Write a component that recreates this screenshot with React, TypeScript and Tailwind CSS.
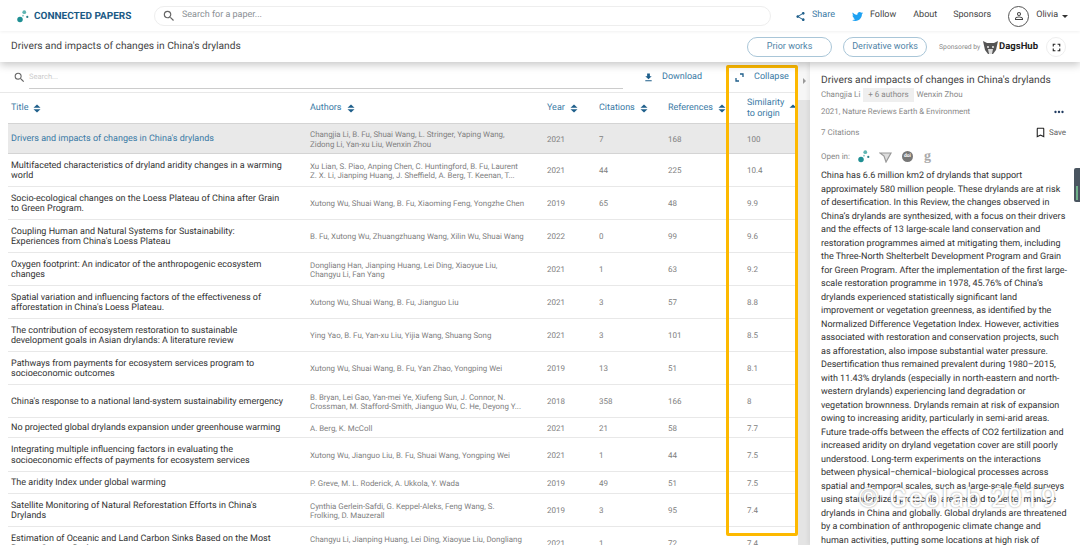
import React from 'react';
import { FaTwitter } from 'react-icons/fa';
import { MdShare, MdFileDownload, MdSearch, MdPersonOutline, MdBookmarkBorder, MdMoreHoriz, MdFullscreen } from 'react-icons/md';

const papers = [
  { title: "Drivers and impacts of changes in China's drylands", authors: 'Changjia Li, B. Fu, Shuai Wang, L. Stringer, Yaping Wang, Zidong Li, Yan-xu Liu, Wenxin Zhou', year: 2021, cit: 7, refs: 168, sim: '100', h: 'h-[31px]' },
  { title: 'Multifaceted characteristics of dryland aridity changes in a warming world', authors: 'Xu Lian, S. Piao, Anping Chen, C. Huntingford, B. Fu, Laurent Z. X. Li, Jianping Huang, J. Sheffield, A. Berg, T. Keenan, T...', year: 2021, cit: 44, refs: 225, sim: '10.4', h: 'h-[33px]' },
  { title: 'Socio-ecological changes on the Loess Plateau of China after Grain to Green Program.', authors: 'Xutong Wu, Shuai Wang, B. Fu, Xiaoming Feng, Yongzhe Chen', year: 2019, cit: 65, refs: 48, sim: '9.9', h: 'h-[33px]' },
  { title: "Coupling Human and Natural Systems for Sustainability: Experiences from China's Loess Plateau", authors: 'B. Fu, Xutong Wu, Zhuangzhuang Wang, Xilin Wu, Shuai Wang', year: 2022, cit: 0, refs: 99, sim: '9.6', h: 'h-[33px]' },
  { title: 'Oxygen footprint: An indicator of the anthropogenic ecosystem changes', authors: 'Dongliang Han, Jianping Huang, Lei Ding, Xiaoyue Liu, Changyu Li, Fan Yang', year: 2021, cit: 1, refs: 63, sim: '9.2', h: 'h-[33px]' },
  { title: "Spatial variation and influencing factors of the effectiveness of afforestation in China's Loess Plateau.", authors: 'Xutong Wu, Shuai Wang, B. Fu, Jianguo Liu', year: 2021, cit: 3, refs: 57, sim: '8.8', h: 'h-[33px]' },
  { title: 'The contribution of ecosystem restoration to sustainable development goals in Asian drylands: A literature review', authors: 'Ying Yao, B. Fu, Yan-xu Liu, Yijia Wang, Shuang Song', year: 2021, cit: 3, refs: 101, sim: '8.5', h: 'h-[33px]' },
  { title: 'Pathways from payments for ecosystem services program to socioeconomic outcomes', authors: 'Xutong Wu, Shuai Wang, B. Fu, Yan Zhao, Yongping Wei', year: 2019, cit: 13, refs: 51, sim: '8.1', h: 'h-[33px]' },
  { title: "China's response to a national land-system sustainability emergency", authors: 'B. Bryan, Lei Gao, Yan-mei Ye, Xiufeng Sun, J. Connor, N. Crossman, M. Stafford-Smith, Jianguo Wu, C. He, Deyong Y...', year: 2018, cit: 358, refs: 166, sim: '8', h: 'h-[33px]' },
  { title: 'No projected global drylands expansion under greenhouse warming', authors: 'A. Berg, K. McColl', year: 2021, cit: 21, refs: 58, sim: '7.7', h: 'h-[20px]' },
  { title: 'Integrating multiple influencing factors in evaluating the socioeconomic effects of payments for ecosystem services', authors: 'Xutong Wu, Jianguo Liu, B. Fu, Shuai Wang, Yongping Wei', year: 2021, cit: 1, refs: 44, sim: '7.5', h: 'h-[34px]' },
  { title: 'The aridity Index under global warming', authors: 'P. Greve, M. L. Roderick, A. Ukkola, Y. Wada', year: 2019, cit: 49, refs: 51, sim: '7.5', h: 'h-[22px]' },
  { title: "Satellite Monitoring of Natural Reforestation Efforts in China's Drylands", authors: 'Cynthia Gerlein-Safdi, G. Keppel-Aleks, Feng Wang, S. Frolking, D. Mauzerall', year: 2019, cit: 3, refs: 95, sim: '7.4', h: 'h-[33px]' },
  { title: 'Estimation of Oceanic and Land Carbon Sinks Based on the Most Recent Oxygen Budget', authors: 'Changyu Li, Jianping Huang, Lei Ding, Xiaoyue Liu, Dongliang Han, Jiping Huang', year: 2021, cit: 1, refs: 72, sim: '7.4', h: 'h-[33px]' },
];

const abstractLines = [
  'China has 6.6 million km2 of drylands that support',
  'approximately 580 million people. These drylands are at risk',
  'of desertification. In this Review, the changes observed in',
  'China\u2019s drylands are synthesized, with a focus on their drivers',
  'and the effects of 13 large-scale land conservation and',
  'restoration programmes aimed at mitigating them, including',
  'the Three-North Shelterbelt Development Program and Grain',
  'for Green Program. After the implementation of the first large-',
  'scale restoration programme in 1978, 45.76% of China\u2019s',
  'drylands experienced statistically significant land',
  'improvement or vegetation greenness, as identified by the',
  'Normalized Difference Vegetation Index. However, activities',
  'associated with restoration and conservation projects, such',
  'as afforestation, also impose substantial water pressure.',
  'Desertification thus remained prevalent during 1980\u20132015,',
  'with 11.43% drylands (especially in north-eastern and north-',
  'western drylands) experiencing land degradation or',
  'vegetation brownness. Drylands remain at risk of expansion',
  'owing to increasing aridity, particularly in semi-arid areas.',
  'Future trade-offs between the effects of CO2 fertilization and',
  'increased aridity on dryland vegetation cover are still poorly',
  'understood. Long-term experiments on the interactions',
  'between physical\u2212chemical\u2212biological processes across',
  'spatial and temporal scales, such as large-scale field surveys',
  'using standardized protocols, are needed to better manage',
  'drylands in China and globally. Global drylands are threatened',
  'by a combination of anthropogenic climate change and',
  'human activities, putting some locations at high risk of',
];

const Sort = ({ up = false }: { up?: boolean }) => (
  <svg width="8" height="9" viewBox="0 0 8 9" className="shrink-0">
    <path d="M4 0.5 L7.5 3.8 H0.5 Z" fill="#1f5f8b" />
    {!up && <path d="M4 8.5 L7.5 5.2 H0.5 Z" fill="#1f5f8b" />}
  </svg>
);

const Logo = () => (
  <svg width="12" height="13" viewBox="0 0 14 15">
    <circle cx="3.5" cy="11" r="3.2" fill="#1f8f93" />
    <circle cx="8.5" cy="2.5" r="2.2" fill="#5fb5b2" />
    <circle cx="12" cy="8" r="1.3" fill="#2c7f86" />
    <circle cx="7" cy="6.5" r="1" fill="#7cc4c0" />
  </svg>
);

export default function App() {
  return (
    <div className="h-[545px] w-[1080px] overflow-hidden bg-white font-['Roboto',sans-serif] text-[#444] [text-rendering:geometricPrecision]">
      {/* top bar */}
      <header className="relative z-20 flex h-[31px] items-center bg-white pl-[17px] pt-[1px] shadow-[0_1px_3px_rgba(0,0,0,0.06)]">
        <Logo />
        <span className="ml-[5px] w-[120px] text-[10px] font-bold text-[#1b5a85]">CONNECTED PAPERS</span>
        <div className="flex h-[20px] w-[617px] items-center gap-[6px] rounded-full border border-[#eee] pl-[7px] text-[9px] text-[#8a8f94]">
          <MdSearch size={14} className="text-[#666]" />
          Search for a paper...
        </div>
        <div className="flex items-center gap-[6px] pl-[24px] text-[9px] text-[#3a7aa5]">
          <MdShare size={11} className="text-[#1f5f8b]" /> Share
        </div>
        <div className="flex items-center gap-[7px] pl-[17px] text-[9px]">
          <FaTwitter size={11} className="text-[#1da1f2]" /> Follow
        </div>
        <span className="pl-[17px] text-[9px]">About</span>
        <span className="pl-[16px] text-[9px]">Sponsors</span>
        <div className="ml-[17px] flex h-[21px] w-[21px] items-center justify-center rounded-full border border-[#555]">
          <MdPersonOutline size={12} />
        </div>
        <span className="pl-[7px] text-[9px]">Olivia</span>
        <span className="ml-[4px] h-0 w-0 border-x-[3px] border-t-[3px] border-x-transparent border-t-[#333]" />
      </header>

      {/* paper bar */}
      <div className="relative z-10 flex h-[31px] items-center bg-white pl-[11px] pr-[14px] pt-[1px] shadow-[0_3px_8px_rgba(0,0,0,0.22)]">
        <span className="flex-1 text-[10.2px] text-[#444]">Drivers and impacts of changes in China's drylands</span>
        <button className="flex h-[20px] w-[85px] items-center justify-center rounded-full border border-[#a9c6d8] text-[9px] text-[#4f83a6]">Prior works</button>
        <button className="ml-[11px] flex h-[20px] w-[84px] items-center justify-center rounded-full border border-[#a9c6d8] text-[9px] text-[#4f83a6]">Derivative works</button>
        <span className="ml-[12px] w-[42px] text-[6.8px] whitespace-nowrap text-[#888]">Sponsored by</span>
        <svg width="15" height="13" viewBox="0 0 15 13" className="ml-[2px]">
          <path d="M0 0 L4 2 H11 L15 0 L13 9 L10 13 H5 L2 9 Z" fill="#555" />
          <path d="M5 8 H10 L9 13 H6 Z" fill="#ddd" />
          <circle cx="5" cy="6" r="0.9" fill="#fff" />
          <circle cx="10" cy="6" r="0.9" fill="#fff" />
        </svg>
        <span className="ml-[1px] text-[9.5px] font-bold text-[#222]">DagsHub</span>
        <div className="ml-[8px] flex h-[20px] w-[20px] items-center justify-center rounded-full border border-[#eee]">
          <MdFullscreen size={13} className="text-[#222]" />
        </div>
      </div>

      <main className="relative flex h-[483px]">
        {/* table column */}
        <section className="w-[798px] shrink-0">
          <div className="flex h-[30px] items-center pl-[13px] pt-[1px]">
            <MdSearch size={13} className="shrink-0 text-[#666]" />
            <div className="ml-[3px] flex h-[23px] w-[594px] shrink-0 items-center border-b border-[#ccc] text-[7.5px] text-[#ccc]">Search...</div>
            <MdFileDownload size={11} className="ml-[20px] shrink-0 text-[#1f5f8b]" />
            <span className="ml-[8px] text-[9px] text-[#3a7aa5]">Download</span>
            <svg width="9" height="9" viewBox="0 0 9 9" className="ml-[33px] shrink-0" fill="none" stroke="#1f5f8b" strokeWidth="1.3">
              <path d="M5 1 H8 V4" />
              <path d="M1 5 V8 H4" />
            </svg>
            <span className="ml-[10px] text-[9px] text-[#3a7aa5]">Collapse</span>
          </div>
          <div className="grid h-[31px] grid-cols-[299px_237px_52px_69px_79px_1fr] items-center border-t border-[#e8e8e8] pl-[11px] pt-[1px] text-[9px] text-[#3a7aa5]">
            <div className="flex items-center gap-[5px]">Title <Sort /></div>
            <div className="flex items-center gap-[5px]">Authors <Sort /></div>
            <div className="flex items-center gap-[5px]">Year <Sort /></div>
            <div className="flex items-center gap-[5px]">Citations <Sort /></div>
            <div className="flex items-center gap-[5px]">References <Sort /></div>
            <div className="flex items-center gap-[5px] leading-[11px]"><span>Similarity<br />to origin</span> <Sort up /></div>
          </div>
          <div className="ml-[8px]">
            {papers.map((p, i) => (
              <div
                key={p.title}
                className={`grid grid-cols-[299px_237px_52px_69px_79px_1fr] items-center border-b pl-[3px] pt-[2px] ${p.h} ${i === 0 ? 'border-t border-[#d4d4d4] bg-[#e9e9e9]' : 'border-[#e8e8e8]'}`}
              >
                <div className={`pr-[25px] text-[9px] leading-[10.5px] ${i === 0 ? 'text-[#3a7aa5]' : 'text-[#333]'}`}>{p.title}</div>
                <div className="pr-[22px] text-[7.9px] leading-[9.5px] text-[#808080]">{p.authors}</div>
                <div className="text-[8px] text-[#808080]">{p.year}</div>
                <div className="text-[8px] text-[#808080]">{p.cit}</div>
                <div className="text-[8px] text-[#808080]">{p.refs}</div>
                <div className="text-[8px] text-[#808080]">{p.sim}</div>
              </div>
            ))}
          </div>
        </section>

        {/* gutter */}
        <div className="flex w-[12px] shrink-0 flex-col bg-[#e4e4e4]">
          <div className="flex h-[38px] items-center justify-center bg-[#f6f6f6]">
            <span className="h-0 w-0 border-y-[3px] border-l-[3px] border-y-transparent border-l-[#999]" />
          </div>
        </div>

        {/* detail panel */}
        <aside className="min-w-0 flex-1 bg-white pl-[11px] pr-[14px] pt-[12px] shadow-[-2px_0_4px_rgba(0,0,0,0.06)]">
          <h2 className="text-[10.2px] leading-[13px] text-[#444]">Drivers and impacts of changes in China's drylands</h2>
          <div className="mt-[1px] flex items-center gap-[3px] text-[8px] text-[#888]">
            <span>Changjia Li</span>
            <span className="bg-[#efefef] px-[5px] py-[1px]">+ 6 authors</span>
            <span>Wenxin Zhou</span>
          </div>
          <div className="relative mt-[4px] h-[12px] text-[7.9px] leading-[12px] text-[#888]">
            <span>2021, Nature Reviews Earth &amp; Environment</span>
            <MdMoreHoriz size={14} className="absolute right-0 top-[-1px] text-[#1f3a5f]" />
          </div>
          <div className="mt-[8px] flex h-[13px] items-center justify-between text-[8px] text-[#888]">
            <span>7 Citations</span>
            <span className="flex items-center gap-[2px] text-[#666]"><MdBookmarkBorder size={13} className="text-[#222]" /> Save</span>
          </div>
          <div className="mt-[11px] flex h-[13px] items-center text-[8px] text-[#888]">
            <span>Open in:</span>
            <span className="ml-[8px]"><Logo /></span>
            <svg width="13" height="12" viewBox="0 0 13 12" className="ml-[9px]"><path d="M1 2 H12 L7 11 L5 5 Z" fill="#ddd" stroke="#999" strokeWidth="1.2" /></svg>
            <span className="ml-[10px] flex h-[11px] w-[11px] items-center justify-center rounded-full bg-[#777] text-[5px] font-bold text-white">doi</span>
            <span className="ml-[11px] font-['Liberation_Serif',serif] text-[14px] leading-none font-bold text-[#aaa]">g</span>
          </div>
          <div className="mt-[7px] text-[9px] leading-[13.5px] whitespace-nowrap text-[#333]">
            {abstractLines.map((line) => (
              <div key={line}>{line}</div>
            ))}
          </div>
        </aside>

        {/* highlight box drawn over the table */}
        <div className="pointer-events-none absolute left-[726px] top-[3px] h-[471px] w-[72px] rounded-[2px] border-[3px] border-[#fdb900]" />
        {/* side widget */}
        <div className="absolute right-0 top-[106px] flex h-[34px] w-[6px] items-end justify-center rounded-l-[2px] bg-[#4a5560] pb-[2px]">
          <div className="h-[14px] w-[2px] bg-[#6fb08a]" />
        </div>
        {/* watermark */}
        <div className="pointer-events-none absolute left-[858px] top-[423px] text-[27px] leading-none font-normal tracking-[1.5px] whitespace-nowrap text-white [text-shadow:0_0_2px_rgba(90,90,90,0.7)]">© Geolab 2019</div>
      </main>
    </div>
  );
}
